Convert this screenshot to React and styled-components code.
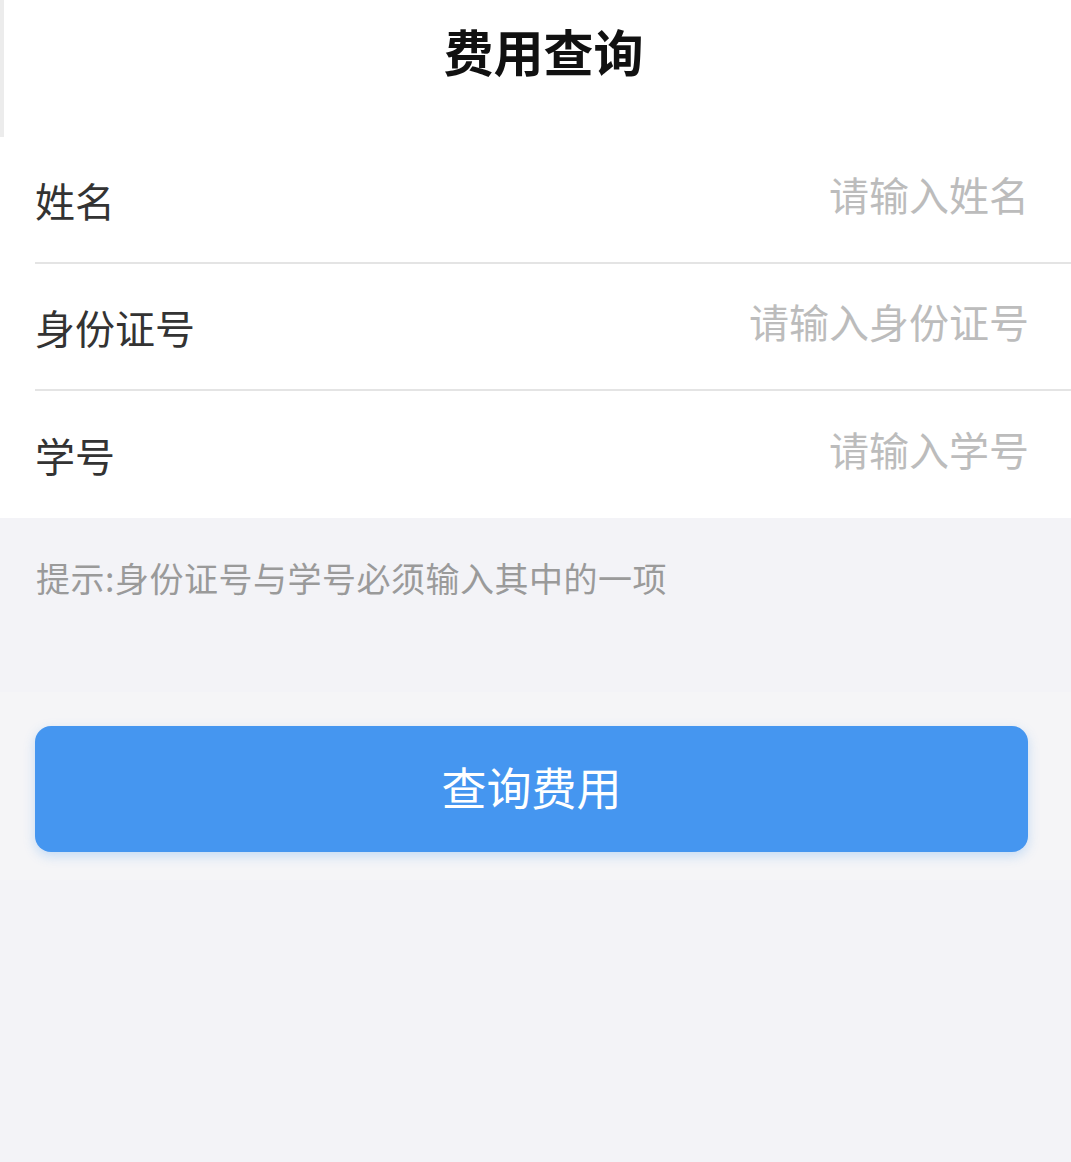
import React from "react";
import styled, { createGlobalStyle } from "styled-components";

const GlobalStyle = createGlobalStyle`
  html, body {
    margin: 0;
    padding: 0;
    background: #f3f3f7;
    font-family: "Noto Sans CJK SC", "Noto Sans", sans-serif;
  }
  * { box-sizing: border-box; }
`;

const Page = styled.div`
  width: 1071px;
  min-height: 1162px;
  background: #f3f3f7;
  display: flex;
  flex-direction: column;
`;

const Header = styled.header`
  height: 137px;
  background: #ffffff;
  border-left: 4px solid #ececec;
  padding-left: 12px;
  display: flex;
  align-items: center;
  justify-content: center;
`;

const Title = styled.h1`
  margin: 0 0 38px;
  font-size: 50px;
  line-height: 60px;
  font-weight: 700;
  color: #111111;
`;

const Form = styled.div`
  background: #ffffff;
  display: flex;
  flex-direction: column;
`;

const Row = styled.label`
  margin-left: 35px;
  height: 127px;
  border-bottom: ${(p) => (p.$last ? "none" : "2px solid #e4e4e4")};
  display: flex;
  align-items: center;
  justify-content: space-between;
  padding-right: 42px;
`;

const Label = styled.span`
  font-size: 40px;
  line-height: 48px;
  color: #333333;
  white-space: nowrap;
`;

const Input = styled.input`
  flex: 1;
  min-width: 0;
  margin-bottom: 12px;
  border: none;
  outline: none;
  background: transparent;
  text-align: right;
  font-family: inherit;
  font-size: 40px;
  line-height: 48px;
  color: #333333;
  padding: 0;
  &::placeholder {
    color: #bcbcbc;
  }
`;

const Hint = styled.p`
  margin: 0;
  height: 174px;
  padding: 38px 0 0 36px;
  font-size: 34px;
  line-height: 44px;
  letter-spacing: 0.5px;
  color: #9a9a9a;
`;

const ButtonBand = styled.div`
  background: #f5f5f7;
  padding: 34px 43px 28px 35px;
`;

const SubmitButton = styled.button`
  width: 100%;
  height: 126px;
  border: none;
  border-radius: 16px;
  background: #4596f0;
  color: #ffffff;
  font-family: inherit;
  font-size: 45px;
  line-height: 54px;
  padding: 0 0 4px;
  box-shadow: 0 4px 12px rgba(69, 150, 240, 0.28);
  cursor: pointer;
`;

const fields = [
  { label: "姓名", placeholder: "请输入姓名" },
  { label: "身份证号", placeholder: "请输入身份证号" },
  { label: "学号", placeholder: "请输入学号" },
];

export default function App() {
  return (
    <>
      <GlobalStyle />
      <Page>
        <Header>
          <Title>费用查询</Title>
        </Header>
        <Form>
          {fields.map((f, i) => (
            <Row key={f.label} $last={i === fields.length - 1}>
              <Label>{f.label}</Label>
              <Input placeholder={f.placeholder} />
            </Row>
          ))}
        </Form>
        <Hint>提示:身份证号与学号必须输入其中的一项</Hint>
        <ButtonBand>
          <SubmitButton>查询费用</SubmitButton>
        </ButtonBand>
      </Page>
    </>
  );
}
